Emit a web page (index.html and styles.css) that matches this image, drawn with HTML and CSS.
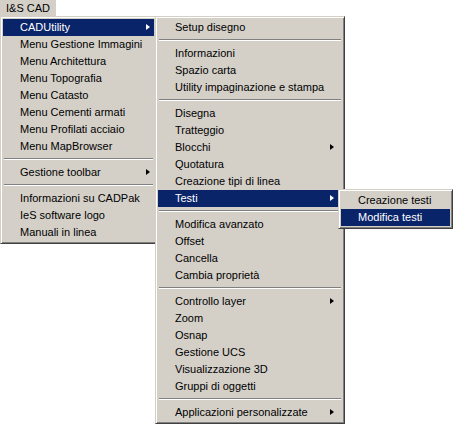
FILE: index.html
```html
<!DOCTYPE html>
<html lang="it">
<head>
  <meta charset="UTF-8">
  <title>I&amp;S CAD</title>
  <link rel="stylesheet" href="styles.css">
</head>
<body>

<div class="menubar">
  <span class="bar-item">I&amp;S CAD</span>
</div>

<!-- main drop down -->
<div class="menu menu-main">
  <div class="item active sub">CADUtility</div>
  <div class="item">Menu Gestione Immagini</div>
  <div class="item">Menu Architettura</div>
  <div class="item">Menu Topografia</div>
  <div class="item">Menu Catasto</div>
  <div class="item">Menu Cementi armati</div>
  <div class="item">Menu Profilati acciaio</div>
  <div class="item">Menu MapBrowser</div>
  <div class="sep"></div>
  <div class="item sub">Gestione toolbar</div>
  <div class="sep"></div>
  <div class="item">Informazioni su CADPak</div>
  <div class="item">IeS software logo</div>
  <div class="item">Manuali in linea</div>
</div>

<!-- CADUtility submenu -->
<div class="menu menu-cad">
  <div class="item">Setup disegno</div>
  <div class="sep"></div>
  <div class="item">Informazioni</div>
  <div class="item">Spazio carta</div>
  <div class="item">Utility impaginazione e stampa</div>
  <div class="sep"></div>
  <div class="item">Disegna</div>
  <div class="item">Tratteggio</div>
  <div class="item sub">Blocchi</div>
  <div class="item">Quotatura</div>
  <div class="item">Creazione tipi di linea</div>
  <div class="item active sub">Testi</div>
  <div class="sep"></div>
  <div class="item">Modifica avanzato</div>
  <div class="item">Offset</div>
  <div class="item">Cancella</div>
  <div class="item">Cambia proprietà</div>
  <div class="sep"></div>
  <div class="item sub">Controllo layer</div>
  <div class="item">Zoom</div>
  <div class="item">Osnap</div>
  <div class="item">Gestione UCS</div>
  <div class="item">Visualizzazione 3D</div>
  <div class="item">Gruppi di oggetti</div>
  <div class="sep"></div>
  <div class="item sub">Applicazioni personalizzate</div>
</div>

<!-- Testi submenu -->
<div class="menu menu-testi">
  <div class="item">Creazione testi</div>
  <div class="item active">Modifica testi</div>
</div>

</body>
</html>
```

FILE: styles.css
```css
body {
  margin: 0;
  background-color: #fff;
  font-family: "Liberation Sans", Arial, sans-serif;
  font-size: 11px;
  color: #000;
  position: relative;
  height: 425px;
}

.menubar {
  display: flex;
  height: 16px;
}

.bar-item {
  background-color: #d4d0c8;
  padding: 0 6px;
  line-height: 16px;
}

/* classic 3D menu box */
.menu {
  position: absolute;
  top: 16px;
  box-sizing: border-box;
  background-color: #d4d0c8;
  border: 1px solid;
  border-color: #d4d0c8 #404040 #404040 #d4d0c8;
  box-shadow: inset 1px 1px #fff, inset -1px -1px #808080;
  padding: 2px;
}

.menu-main {
  left: 0;
  width: 157px;
}

.menu-cad {
  left: 155px;
  width: 190px;
}

.menu-testi {
  left: 338px;
  top: 189px;
  width: 115px;
}

.item {
  position: relative;
  height: 17px;
  line-height: 17px;
  padding-left: 17px;
  white-space: nowrap;
}

.item.active {
  background-color: #0a246a;
  color: #fff;
}

/* submenu arrow */
.item.sub::after {
  content: "";
  position: absolute;
  top: 5px;
  right: 8px;
  border-style: solid;
  border-width: 3.5px 0 3.5px 4px;
  border-color: transparent transparent transparent #000;
}

.menu-main .item.sub::after {
  right: 4px;
}

.item.active.sub::after {
  border-left-color: #fff;
}

.sep {
  height: 9px;
  margin: 0 1px;
  box-sizing: border-box;
  padding-top: 3px;
}

.sep::before {
  content: "";
  display: block;
  border-top: 1px solid #808080;
  border-bottom: 1px solid #fff;
}
```
